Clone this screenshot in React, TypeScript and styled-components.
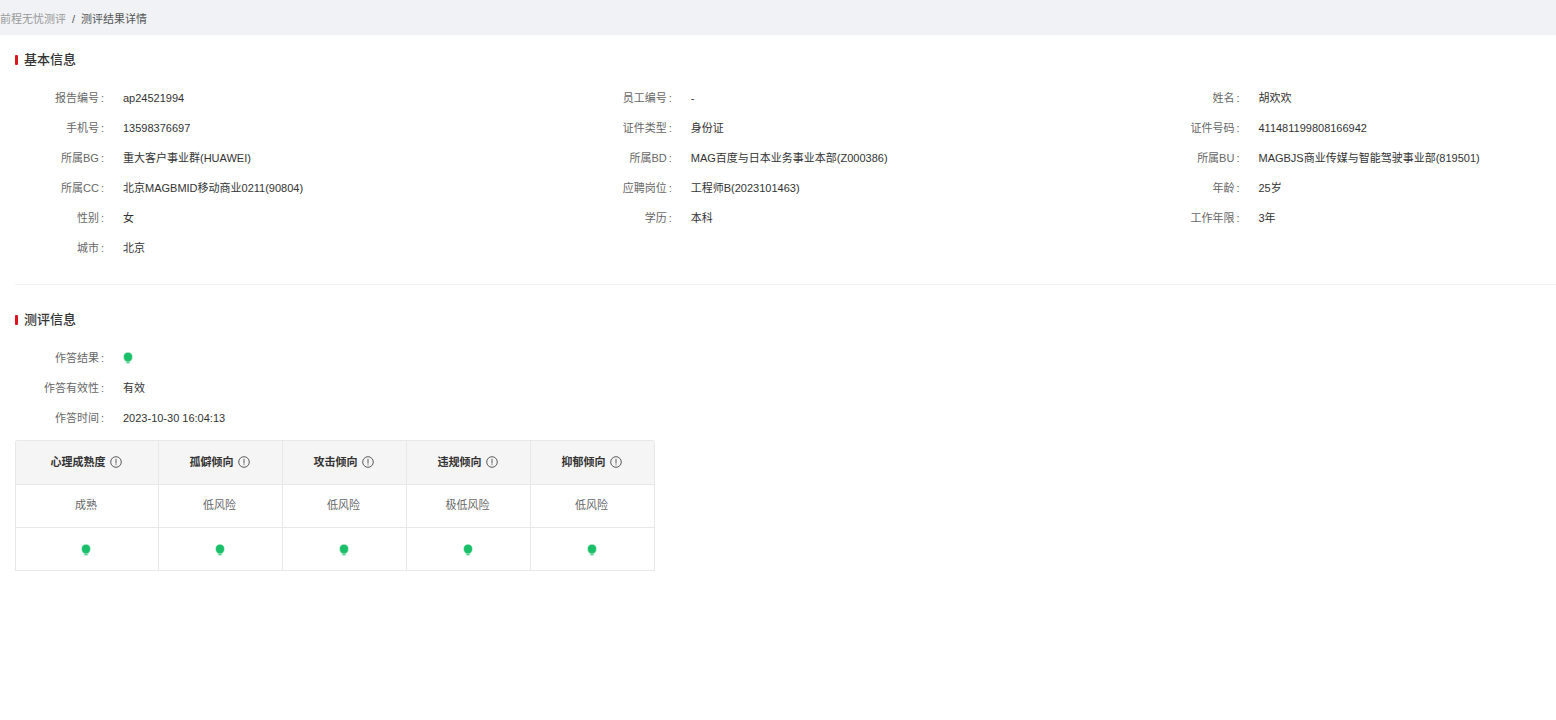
import React from 'react';
import styled, { createGlobalStyle } from 'styled-components';

const GlobalStyle = createGlobalStyle`
  *, *::before, *::after { box-sizing: border-box; }
  body {
    margin: 0;
    overflow-x: hidden;
    background: #fff;
    color: #333;
    font-family: "Liberation Sans", "Noto Sans CJK SC", sans-serif;
    font-size: 11px;
    line-height: 20px;
  }
`;

const Breadcrumb = styled.nav`
  display: flex;
  align-items: center;
  gap: 6px;
  height: 35px;
  padding-top: 2px;
  background: #f0f2f6;
  color: #555;
  white-space: nowrap;
`;

const CrumbLink = styled.a`
  color: #999;
  text-decoration: none;
`;

const Content = styled.main`
  padding-left: 15px;
`;

const Section = styled.section<{ $divided?: boolean }>`
  padding-top: ${p => (p.$divided ? 25 : 15)}px;
  border-top: ${p => (p.$divided ? '1px solid #f3f3f3' : 'none')};
`;

const SectionTitle = styled.h2`
  display: flex;
  align-items: center;
  gap: 6px;
  margin: 0 0 18px;
  font-size: 13px;
  font-weight: 500;
  line-height: 20px;

  &::before {
    content: '';
    width: 3px;
    height: 10px;
    border-radius: 1px;
    background: #d9151e;
  }
`;

const Fields = styled.dl<{ $columns?: string }>`
  display: grid;
  grid-template-columns: ${p => p.$columns ?? '1fr'};
  row-gap: 10px;
  margin: 0;
`;

const FieldRow = styled.div`
  display: grid;
  grid-template-columns: 89px 1fr;
  column-gap: 19px;
  white-space: nowrap;
`;

const Label = styled.dt`
  color: #666;
  text-align: right;

  &::after {
    content: ':';
    margin-left: 2px;
  }
`;

const Value = styled.dd`
  display: flex;
  align-items: center;
  margin: 0;
`;

const BasicFields = styled(Fields)`
  padding-bottom: 26px;
`;

const ResultTable = styled.table`
  width: 640px;
  max-width: 100%;
  margin-top: 12px;
  table-layout: fixed;
  border-collapse: separate;
  border-spacing: 0;
  border: 1px solid #e8e8e8;
  border-width: 1px 0 0 1px;
  border-radius: 3px 3px 0 0;
`;

const HeadCell = styled.th<{ $width: number }>`
  width: ${p => p.$width}px;
  height: 44px;
  padding: 0 2px 2px 0;
  border: 1px solid #e8e8e8;
  border-width: 0 1px 1px 0;
  background: #f5f5f5;
  font-weight: 600;

  &:first-child { border-top-left-radius: 3px; }
  &:last-child { border-top-right-radius: 3px; }
`;

const HeadContent = styled.div`
  display: flex;
  align-items: center;
  justify-content: center;
  gap: 4px;
`;

const Cell = styled.td`
  height: 43px;
  padding: 0 2px 2px 0;
  border: 1px solid #e8e8e8;
  border-width: 0 1px 1px 0;
  color: #666;
  text-align: center;
`;

const Icon = styled.svg`
  display: block;
  flex: none;
`;

const BulbCell = styled.div`
  display: flex;
  justify-content: center;
  padding-top: 3px;
`;

const Bulb = () => (
  <Icon width="10" height="12" viewBox="0 0 10 12" role="img" aria-label="正常">
    <ellipse cx="5" cy="5" rx="4.8" ry="5" fill="#1abf69" opacity="0.35" />
    <ellipse cx="5" cy="5" rx="4" ry="4.2" fill="#1abf69" />
    <path d="M2.6 9h4.8v1.7q0 1.1-1.1 1.1H3.7q-1.1 0-1.1-1.1z" fill="#1abf69" opacity="0.3" />
    <path d="M3.6 10.5h2.8" stroke="#1abf69" strokeWidth="0.8" opacity="0.8" />
  </Icon>
);

const Info = () => (
  <Icon width="12" height="12" viewBox="0 0 12 12" fill="none" stroke="#333" aria-hidden="true">
    <circle cx="6" cy="6" r="5.3" strokeWidth="0.8" />
    <path d="M6 2.8v4.8M6 8.3v0.9" strokeWidth="0.8" />
  </Icon>
);

type Entry = [string, React.ReactNode];

const basicInfo: Entry[] = [
  ['报告编号', 'ap24521994'],
  ['员工编号', '-'],
  ['姓名', '胡欢欢'],
  ['手机号', '13598376697'],
  ['证件类型', '身份证'],
  ['证件号码', '411481199808166942'],
  ['所属BG', '重大客户事业群(HUAWEI)'],
  ['所属BD', 'MAG百度与日本业务事业本部(Z000386)'],
  ['所属BU', 'MAGBJS商业传媒与智能驾驶事业部(819501)'],
  ['所属CC', '北京MAGBMID移动商业0211(90804)'],
  ['应聘岗位', '工程师B(2023101463)'],
  ['年龄', '25岁'],
  ['性别', '女'],
  ['学历', '本科'],
  ['工作年限', '3年'],
  ['城市', '北京'],
];

const resultInfo: Entry[] = [
  ['作答结果', <Bulb key="result" />],
  ['作答有效性', '有效'],
  ['作答时间', '2023-10-30 16:04:13'],
];

const dimensions = [
  { name: '心理成熟度', level: '成熟', width: 143 },
  { name: '孤僻倾向', level: '低风险', width: 124 },
  { name: '攻击倾向', level: '低风险', width: 124 },
  { name: '违规倾向', level: '极低风险', width: 124 },
  { name: '抑郁倾向', level: '低风险', width: 124 },
];

const renderField = ([label, value]: Entry) => (
  <FieldRow key={label}>
    <Label>{label}</Label>
    <Value>{value}</Value>
  </FieldRow>
);

export default function App() {
  return (
    <>
      <GlobalStyle />
      <Breadcrumb aria-label="面包屑">
        <CrumbLink href="#">前程无忧测评</CrumbLink>
        <span>/</span>
        <span aria-current="page">测评结果详情</span>
      </Breadcrumb>
      <Content>
        <Section>
          <SectionTitle>基本信息</SectionTitle>
          <BasicFields $columns="minmax(0, 7fr) minmax(0, 7fr) minmax(0, 5fr)">
            {basicInfo.map(renderField)}
          </BasicFields>
        </Section>
        <Section $divided>
          <SectionTitle>测评信息</SectionTitle>
          <Fields>{resultInfo.map(renderField)}</Fields>
          <ResultTable>
            <thead>
              <tr>
                {dimensions.map(d => (
                  <HeadCell key={d.name} $width={d.width} scope="col">
                    <HeadContent>
                      {d.name}
                      <Info />
                    </HeadContent>
                  </HeadCell>
                ))}
              </tr>
            </thead>
            <tbody>
              <tr>
                {dimensions.map(d => (
                  <Cell key={d.name}>{d.level}</Cell>
                ))}
              </tr>
              <tr>
                {dimensions.map(d => (
                  <Cell key={d.name}>
                    <BulbCell>
                      <Bulb />
                    </BulbCell>
                  </Cell>
                ))}
              </tr>
            </tbody>
          </ResultTable>
        </Section>
      </Content>
    </>
  );
}
